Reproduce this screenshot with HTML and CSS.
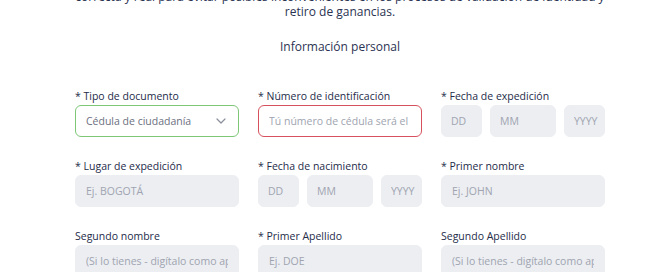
FILE: index.html
```html
<!doctype html>
<html lang="es">

<head>
  <meta charset="UTF-8">
  <meta name="viewport" content="width=device-width, initial-scale=1">
  <title>Información personal</title>
  <link rel="stylesheet" href="styles.css">
</head>

<body>
  <main class="page">
    <header class="intro">
      <p class="intro-text">correcta y real para evitar posibles inconvenientes en los procesos de validación de identidad y retiro de ganancias.</p>
      <h2 class="section-title">Información personal</h2>
    </header>

    <form class="form-grid">
      <div class="field">
        <label class="label">* Tipo de documento</label>
        <div class="select is-valid">
          <span>Cédula de ciudadanía</span>
          <svg class="chevron" width="10" height="6" viewBox="0 0 10 6">
            <path d="M1 1l4 4 4-4" fill="none" stroke="#8a8f9c" stroke-width="1.2" stroke-linecap="round" stroke-linejoin="round" />
          </svg>
        </div>
      </div>

      <div class="field">
        <label class="label">* Número de identificación</label>
        <input class="input is-error" type="text" placeholder="Tú número de cédula será el usuario">
      </div>

      <div class="field">
        <label class="label">* Fecha de expedición</label>
        <div class="date">
          <input class="input" type="text" placeholder="DD">
          <input class="input" type="text" placeholder="MM">
          <input class="input" type="text" placeholder="YYYY">
        </div>
      </div>

      <div class="field">
        <label class="label">* Lugar de expedición</label>
        <input class="input" type="text" placeholder="Ej. BOGOTÁ">
      </div>

      <div class="field">
        <label class="label">* Fecha de nacimiento</label>
        <div class="date">
          <input class="input" type="text" placeholder="DD">
          <input class="input" type="text" placeholder="MM">
          <input class="input" type="text" placeholder="YYYY">
        </div>
      </div>

      <div class="field">
        <label class="label">* Primer nombre</label>
        <input class="input" type="text" placeholder="Ej. JOHN">
      </div>

      <div class="field">
        <label class="label">Segundo nombre</label>
        <input class="input" type="text" placeholder="(Si lo tienes - digítalo como aparece)">
      </div>

      <div class="field">
        <label class="label">* Primer Apellido</label>
        <input class="input" type="text" placeholder="Ej. DOE">
      </div>

      <div class="field">
        <label class="label">Segundo Apellido</label>
        <input class="input" type="text" placeholder="(Si lo tienes - digítalo como aparece)">
      </div>
    </form>
  </main>
</body>

</html>
```

FILE: styles.css
```css
body {
  margin: 0;
  background: #fff;
  color: #262d4b;
  font-family: "Open Sans", "DejaVu Sans", sans-serif;
  overflow: hidden;
}

.page {
  width: 560px;
  margin-left: 60px;
}

.intro {
  margin-top: -11px;
  text-align: center;
}

.intro-text {
  margin: 0;
  font-size: 12px;
  line-height: 15px;
  color: #2b3352;
}

.section-title {
  margin: 20px 0 0;
  font-size: 12px;
  line-height: 15px;
  font-weight: 400;
  color: #2b3352;
}

.form-grid {
  display: grid;
  grid-template-columns: repeat(3, 164px);
  column-gap: 19px;
  row-gap: 22px;
  margin-top: 35px;
  padding-left: 15px;
}

.field {
  display: flex;
  flex-direction: column;
  gap: 2px;
}

.label {
  font-size: 10.5px;
  line-height: 14px;
  color: #252c4a;
}

.input,
.select {
  box-sizing: border-box;
  width: 100%;
  height: 32px;
  border: 1px solid #eceef2;
  border-radius: 6px;
  background: #eceef2;
  padding: 0 10px;
  font: inherit;
  font-size: 10.5px;
  color: #5e6473;
  outline: none;
}

.input::placeholder {
  color: #a0a4b0;
}

.select {
  display: flex;
  align-items: center;
  justify-content: space-between;
  padding: 0 12px 0 10px;
  background: #fff;
  color: #6b7080;
}

.is-valid {
  border-color: #7dc777;
}

.is-error {
  border-color: #d6525e;
  background: #fff;
}

.date {
  display: grid;
  grid-template-columns: 41px 1fr 41px;
  gap: 8px;
}

.date .input {
  padding: 0 4px 0 9px;
}
```
